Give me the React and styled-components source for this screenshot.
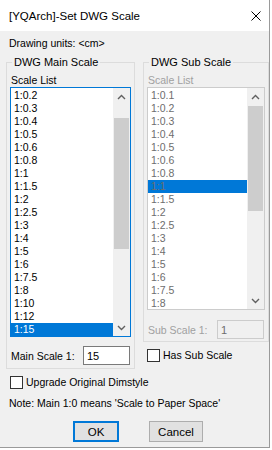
import React from "react";
import styled, { createGlobalStyle } from "styled-components";

const GlobalStyle = createGlobalStyle`
  html, body {
    margin: 0;
    padding: 0;
    background: #ffffff;
  }
  body {
    font-family: "Liberation Sans", Arial, sans-serif;
    font-size: 10.5px;
    color: #000000;
  }
`;

const Window = styled.div`
  width: 269px;
  height: 447px;
  border-right: 1px solid #9a9a9a;
  border-bottom: 1px solid #9a9a9a;
  display: flex;
  flex-direction: column;
  background: #f0f0f0;
`;

const TitleBar = styled.div`
  height: 31px;
  flex: none;
  background: #ffffff;
  display: flex;
  align-items: center;
  padding-left: 9px;
  padding-right: 8px;
  font-size: 11.5px;
`;

const TitleText = styled.span`
  flex: 1;
  line-height: 16px;
`;

const CloseButton = styled.div`
  width: 10px;
  height: 10px;
  display: flex;
`;

const Body = styled.div`
  flex: 1;
  display: flex;
  flex-direction: column;
  padding-left: 6px;
`;

const UnitsLine = styled.div`
  padding: 5px 0 0 3px;
  line-height: 15px;
`;

const GroupRow = styled.div`
  display: flex;
  align-items: flex-start;
  gap: 8px;
  margin-top: 4px;
`;

const Column = styled.div`
  width: ${(p) => p.$width}px;
  flex: none;
  display: flex;
  flex-direction: column;
`;

const Group = styled.fieldset`
  box-sizing: border-box;
  width: 100%;
  margin: 0;
  padding: 0 3px ${(p) => p.$bottom}px;
  border: 1px solid #dcdcdc;
  min-inline-size: 0;
`;

const Legend = styled.legend`
  padding: 0 2px;
  margin-left: 2px;
  line-height: 14px;
  font-size: 11px;
`;

const FieldLabel = styled.div`
  margin-top: 4px;
  padding-left: 1px;
  line-height: 14px;
  color: ${(p) => (p.$disabled ? "#a0a0a0" : "#000000")};
`;

const ListBox = styled.div`
  box-sizing: border-box;
  height: ${(p) => p.$height}px;
  display: flex;
  background: #ffffff;
  border: 1px solid ${(p) => (p.$disabled ? "#cccccc" : "#0078d7")};
  padding-top: 1px;
  overflow: hidden;
`;

const Items = styled.div`
  flex: 1;
  display: flex;
  flex-direction: column;
`;

const Item = styled.div`
  height: 13px;
  line-height: 13px;
  padding-left: 3px;
  white-space: nowrap;
  background: ${(p) => (p.$selected ? "#0078d7" : "transparent")};
  color: ${(p) =>
    p.$disabled ? "#6d6d6d" : p.$selected ? "#ffffff" : "#000000"};
`;

const ScrollBar = styled.div`
  width: 17px;
  flex: none;
  display: flex;
  flex-direction: column;
  background: #f0f0f0;
  margin-top: -1px;
`;

const ArrowButton = styled.div`
  height: 17px;
  flex: none;
  display: flex;
  align-items: center;
  justify-content: center;
`;

const Track = styled.div`
  flex: 1;
  display: flex;
  flex-direction: column;
  padding: 0 1px;
`;

const Thumb = styled.div`
  background: #cdcdcd;
  flex: none;
`;

const FieldRow = styled.div`
  display: flex;
  align-items: center;
  justify-content: space-between;
  margin-top: ${(p) => p.$top}px;
  padding: 0 1px;
  color: ${(p) => (p.$disabled ? "#a0a0a0" : "#000000")};
`;

const TextBox = styled.div`
  box-sizing: border-box;
  width: 47px;
  height: ${(p) => p.$height}px;
  border: 1px solid ${(p) => (p.$disabled ? "#cccccc" : "#7a7a7a")};
  background: ${(p) => (p.$disabled ? "#f0f0f0" : "#ffffff")};
  color: ${(p) => (p.$disabled ? "#6d6d6d" : "#000000")};
  padding-left: 3px;
  display: flex;
  align-items: center;
  font-size: 11px;
`;

const CheckRow = styled.div`
  display: flex;
  align-items: center;
  gap: 3px;
  margin-top: ${(p) => p.$top}px;
  padding-left: 4px;
  line-height: 13px;
  white-space: nowrap;
`;

const CheckBox = styled.span`
  box-sizing: border-box;
  width: 13px;
  height: 13px;
  border: 1px solid #333333;
  background: #ffffff;
  flex: none;
`;

const Note = styled.div`
  margin-top: 7px;
  padding-left: 3px;
  line-height: 14px;
`;

const ButtonRow = styled.div`
  display: flex;
  gap: 30px;
  margin-top: 11px;
  padding-left: 67px;
`;

const Button = styled.div`
  box-sizing: border-box;
  width: ${(p) => p.$width}px;
  height: 21px;
  background: #e1e1e1;
  border: ${(p) => (p.$default ? "2px solid #0078d7" : "1px solid #adadad")};
  display: flex;
  align-items: center;
  justify-content: center;
  font-size: 11.5px;
`;

const mainScales = [
  "1:0.2", "1:0.3", "1:0.4", "1:0.5", "1:0.6", "1:0.8", "1:1", "1:1.5",
  "1:2", "1:2.5", "1:3", "1:4", "1:5", "1:6", "1:7.5", "1:8", "1:10",
  "1:12", "1:15",
];

const subScales = [
  "1:0.1", "1:0.2", "1:0.3", "1:0.4", "1:0.5", "1:0.6", "1:0.8", "1:1",
  "1:1.5", "1:2", "1:2.5", "1:3", "1:4", "1:5", "1:6", "1:7.5", "1:8",
];

function Chevron({ down }) {
  return (
    <svg width="9" height="6" viewBox="0 0 9 6">
      <polyline
        points={down ? "1,1 4.5,4.5 8,1" : "1,5 4.5,1.5 8,5"}
        fill="none"
        stroke="#606060"
        strokeWidth="1.4"
      />
    </svg>
  );
}

function ScaleList({ items, selected, height, disabled, thumbTop, thumbHeight }) {
  return (
    <ListBox $height={height} $disabled={disabled}>
      <Items>
        {items.map((s) => (
          <Item key={s} $selected={s === selected} $disabled={disabled}>
            {s}
          </Item>
        ))}
      </Items>
      <ScrollBar>
        <ArrowButton>
          <Chevron />
        </ArrowButton>
        <Track>
          <Thumb style={{ marginTop: thumbTop, height: thumbHeight }} />
        </Track>
        <ArrowButton>
          <Chevron down />
        </ArrowButton>
      </ScrollBar>
    </ListBox>
  );
}

export default function App() {
  return (
    <>
      <GlobalStyle />
      <Window>
        <TitleBar>
          <TitleText>[YQArch]-Set DWG Scale</TitleText>
          <CloseButton>
            <svg width="10" height="10" viewBox="0 0 10 10">
              <path d="M0.5 0.5 L9.5 9.5 M9.5 0.5 L0.5 9.5" stroke="#000" strokeWidth="1" />
            </svg>
          </CloseButton>
        </TitleBar>
        <Body>
          <UnitsLine>Drawing units: &lt;cm&gt;</UnitsLine>
          <GroupRow>
            <Column $width={129}>
              <Group $bottom={3}>
                <Legend>DWG Main Scale</Legend>
                <FieldLabel>Scale List</FieldLabel>
                <ScaleList
                  items={mainScales}
                  selected="1:15"
                  height={250}
                  thumbTop={13}
                  thumbHeight={131}
                />
                <FieldRow $top={9}>
                  <span>Main Scale 1:</span>
                  <TextBox $height={19}>15</TextBox>
                </FieldRow>
              </Group>
              <CheckRow $top={7}>
                <CheckBox />
                <span>Upgrade Original Dimstyle</span>
              </CheckRow>
            </Column>
            <Column $width={126}>
              <Group $bottom={2}>
                <Legend>DWG Sub Scale</Legend>
                <FieldLabel $disabled>Scale List</FieldLabel>
                <ScaleList
                  items={subScales}
                  selected="1:1"
                  height={223}
                  disabled
                  thumbTop={1}
                  thumbHeight={105}
                />
                <FieldRow $top={10} $disabled>
                  <span>Sub Scale 1:</span>
                  <TextBox $height={19} $disabled>1</TextBox>
                </FieldRow>
              </Group>
              <CheckRow $top={7}>
                <CheckBox />
                <span>Has Sub Scale</span>
              </CheckRow>
            </Column>
          </GroupRow>
          <Note>Note: Main 1:0 means 'Scale to Paper Space'</Note>
          <ButtonRow>
            <Button $width={46} $default>OK</Button>
            <Button $width={54}>Cancel</Button>
          </ButtonRow>
        </Body>
      </Window>
    </>
  );
}
